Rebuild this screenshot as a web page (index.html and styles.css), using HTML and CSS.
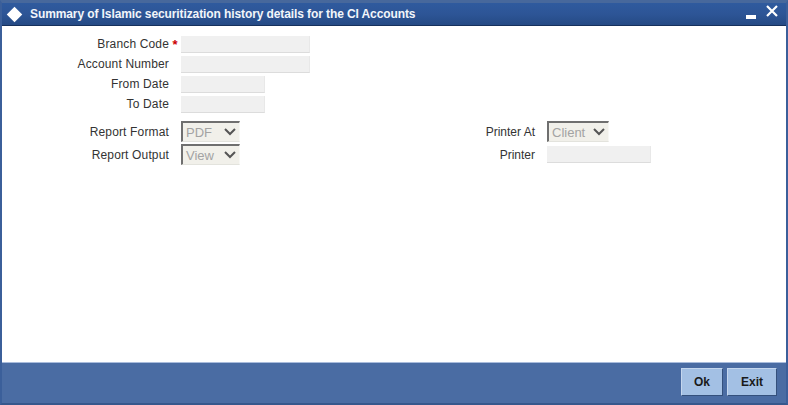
FILE: index.html
```html
<!DOCTYPE html>
<html lang="en">
<head>
    <meta charset="UTF-8">
    <title>Summary of Islamic securitization history details</title>
    <link rel="stylesheet" href="styles.css">
</head>
<body>
    <div class="window">
        <div class="titlebar">
            <span class="diamond"></span>
            <h1>Summary of Islamic securitization history details for the CI Accounts</h1>
            <svg class="win-icon min" width="10" height="4" viewBox="0 0 10 4"><rect width="10" height="4" fill="#fff"/></svg>
            <svg class="win-icon close" width="12" height="12" viewBox="0 0 12 12"><path d="M1 1 L11 11 M11 1 L1 11" stroke="#fff" stroke-width="2.2" fill="none"/></svg>
        </div>

        <div class="content">
            <div class="fields">
                <div class="row">
                    <label>Branch Code</label><span class="req">*</span>
                    <input class="txt wide" type="text" disabled>
                </div>
                <div class="row">
                    <label>Account Number</label><span class="req"></span>
                    <input class="txt wide" type="text" disabled>
                </div>
                <div class="row">
                    <label>From Date</label><span class="req"></span>
                    <input class="txt date" type="text" disabled>
                </div>
                <div class="row">
                    <label>To Date</label><span class="req"></span>
                    <input class="txt date" type="text" disabled>
                </div>
            </div>

            <div class="report">
                <div class="col">
                    <div class="row sel-row">
                        <label>Report Format</label><span class="req"></span>
                        <div class="select fmt">
                            <span>PDF</span>
                            <svg width="12" height="8" viewBox="0 0 12 8"><path d="M1 1 L6 6 L11 1" stroke="#555" stroke-width="2" fill="none"/></svg>
                        </div>
                    </div>
                    <div class="row sel-row">
                        <label>Report Output</label><span class="req"></span>
                        <div class="select fmt">
                            <span>View</span>
                            <svg width="12" height="8" viewBox="0 0 12 8"><path d="M1 1 L6 6 L11 1" stroke="#555" stroke-width="2" fill="none"/></svg>
                        </div>
                    </div>
                </div>
                <div class="col right">
                    <div class="row sel-row">
                        <label>Printer At</label><span class="req"></span>
                        <div class="select client">
                            <span>Client</span>
                            <svg width="12" height="8" viewBox="0 0 12 8"><path d="M1 1 L6 6 L11 1" stroke="#555" stroke-width="2" fill="none"/></svg>
                        </div>
                    </div>
                    <div class="row sel-row">
                        <label>Printer</label><span class="req"></span>
                        <input class="txt printer" type="text" disabled>
                    </div>
                </div>
            </div>
        </div>

        <div class="footer">
            <button>Ok</button>
            <button>Exit</button>
        </div>
    </div>
</body>
</html>
```

FILE: styles.css
```css
* {
    margin: 0;
    padding: 0;
    box-sizing: border-box;
}

html, body {
    width: 788px;
    height: 405px;
    overflow: hidden;
}

body {
    font-family: "Liberation Sans", Arial, sans-serif;
    font-size: 12px;
    color: #333;
    background: #3a5d96;
}

.window {
    height: 405px;
    display: flex;
    flex-direction: column;
    border-left: 2px solid #3b5f9a;
    border-right: 2px solid #3b5f9a;
    border-bottom: 2px solid #36578c;
    border-top: 3px solid #47689c;
}

.titlebar {
    height: 23px;
    flex: none;
    display: flex;
    align-items: center;
    padding-left: 5px;
    background: linear-gradient(180deg, #2f5a9e 0%, #2d5596 50%, #254a85 100%);
    border-bottom: 1px solid #16305c;
}

.diamond {
    width: 11px;
    height: 11px;
    background: #fff;
    transform: rotate(45deg);
    margin: 0 10px 0 2px;
}

h1 {
    font-size: 12px;
    font-weight: bold;
    color: #f2f5fa;
    flex: 1;
    white-space: nowrap;
    letter-spacing: -0.1px;
}

.win-icon {
    flex: none;
}

.min {
    margin: 6px 10px 0 0;
}

.close {
    margin: -6px 8px 0 0;
}

.content {
    flex: 1;
    background: #fff;
    padding-top: 8px;
}

.row {
    display: flex;
    align-items: center;
    height: 20px;
}

.row label {
    width: 167px;
    text-align: right;
    white-space: nowrap;
    letter-spacing: 0.15px;
}

.req {
    width: 12px;
    flex: none;
    color: #c00;
    font-weight: bold;
    text-align: center;
    font-size: 13px;
}

.txt {
    height: 17px;
    background: #f0f0f0;
    border: none;
    border-bottom: 1px solid #dcdcdc;
    border-right: 1px solid #e8e8e8;
}

.wide {
    width: 129px;
}

.date {
    width: 84px;
}

.printer {
    width: 104px;
}

.report {
    display: flex;
    margin-top: 6px;
}

.col {
    width: 366px;
}

.col.right label {
    letter-spacing: 0;
}

.sel-row {
    height: 23px;
}

.select {
    height: 21px;
    display: flex;
    align-items: center;
    justify-content: space-between;
    padding: 0 3px;
    background: #f1f0ea;
    border-top: 2px solid #6f6f6f;
    border-left: 2px solid #6f6f6f;
    border-right: 1px solid #f8f8f5;
    border-bottom: 1px solid #e3e3dd;
    color: #a3a3a3;
    font-size: 13px;
}

.fmt {
    width: 59px;
}

.client {
    width: 62px;
}

.footer {
    height: 41px;
    flex: none;
    display: flex;
    justify-content: flex-end;
    gap: 4px;
    padding: 5px 9px 0 0;
    background: #4a6ca3;
    border-top: 1px solid #a9bcdc;
}

button {
    width: 42px;
    height: 28px;
    font-family: "Liberation Sans", Arial, sans-serif;
    font-size: 12px;
    font-weight: bold;
    color: #1a1a1a;
    background: #a3c0e4;
    border: 1px solid;
    border-color: #c4d6ee #34507c #34507c #c4d6ee;
}

button:last-child {
    width: 50px;
}
```
